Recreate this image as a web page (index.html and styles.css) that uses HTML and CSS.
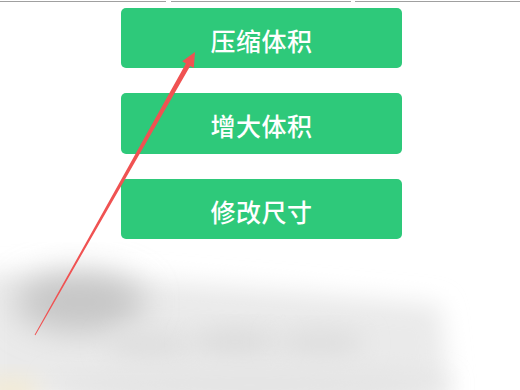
FILE: index.html
```html
<!DOCTYPE html>
<html lang="zh">
<head>
<meta charset="utf-8">
<link rel="stylesheet" href="styles.css">
</head>
<body>
<div class="page">
  <div class="rule">
    <span class="seg seg-a"></span>
    <span class="seg seg-b"></span>
    <span class="seg seg-c"></span>
  </div>
  <div class="buttons">
    <div class="btn">压缩体积</div>
    <div class="btn btn-tall">增大体积</div>
    <div class="btn">修改尺寸</div>
  </div>
  <svg class="smudge" width="520" height="390" viewBox="0 0 520 390">
    <defs>
      <filter id="b1" x="-50%" y="-50%" width="200%" height="200%"><feGaussianBlur stdDeviation="16"/></filter>
      <filter id="b2" x="-50%" y="-50%" width="200%" height="200%"><feGaussianBlur stdDeviation="12"/></filter>
    </defs>
    <polygon points="-20,272 150,280 300,292 440,305 450,400 -20,400" fill="#eaeaea" filter="url(#b2)"/>
    <ellipse cx="80" cy="302" rx="65" ry="30" fill="#c6c6c6" filter="url(#b1)"/>
    <ellipse cx="150" cy="345" rx="45" ry="14" fill="#dedede" filter="url(#b2)"/>
    <ellipse cx="235" cy="342" rx="45" ry="14" fill="#dcdcdc" filter="url(#b2)"/>
    <ellipse cx="320" cy="343" rx="45" ry="14" fill="#dedede" filter="url(#b2)"/>
    <ellipse cx="250" cy="385" rx="200" ry="18" fill="#e4e4e4" filter="url(#b2)"/>
    <ellipse cx="10" cy="392" rx="30" ry="14" fill="#f3ead2" filter="url(#b2)"/>
  </svg>
  <svg class="arrow" width="520" height="390" viewBox="0 0 520 390">
    <polygon fill="#f05252" points="195,52 193.8,68 190.2,65.9 35.4,335.2 34.6,334.8 185.9,63.4 182.2,61.3"/>
  </svg>
</div>
</body>
</html>
```
FILE: styles.css
```css
html, body {
  margin: 0;
  padding: 0;
  background: #ffffff;
}
.page {
  position: relative;
  width: 520px;
  height: 390px;
  overflow: hidden;
  font-family: "Noto Sans CJK SC", "Noto Sans", sans-serif;
}
.rule {
  display: flex;
  height: 2px;
}
.seg {
  display: block;
  height: 1px;
  margin-top: 1px;
  background: #a0a0a0;
}
.seg-a { width: 166px; }
.seg-b { width: 180px; margin-left: 5px; }
.seg-c { flex: 1; margin-left: 4px; }
.buttons {
  display: flex;
  flex-direction: column;
  gap: 25px;
  margin-top: 6px;
  margin-left: 121px;
  width: 281px;
}
.btn {
  height: 60px;
  border-radius: 5px;
  background: #2ec97a;
  color: #ffffff;
  font-size: 25px;
  font-weight: 500;
  display: flex;
  align-items: center;
  justify-content: center;
  padding-top: 3px;
  box-sizing: border-box;
  letter-spacing: 0.5px;
}
.btn-tall {
  height: 61px;
}
.smudge, .arrow {
  position: absolute;
  left: 0;
  top: 0;
}
```
